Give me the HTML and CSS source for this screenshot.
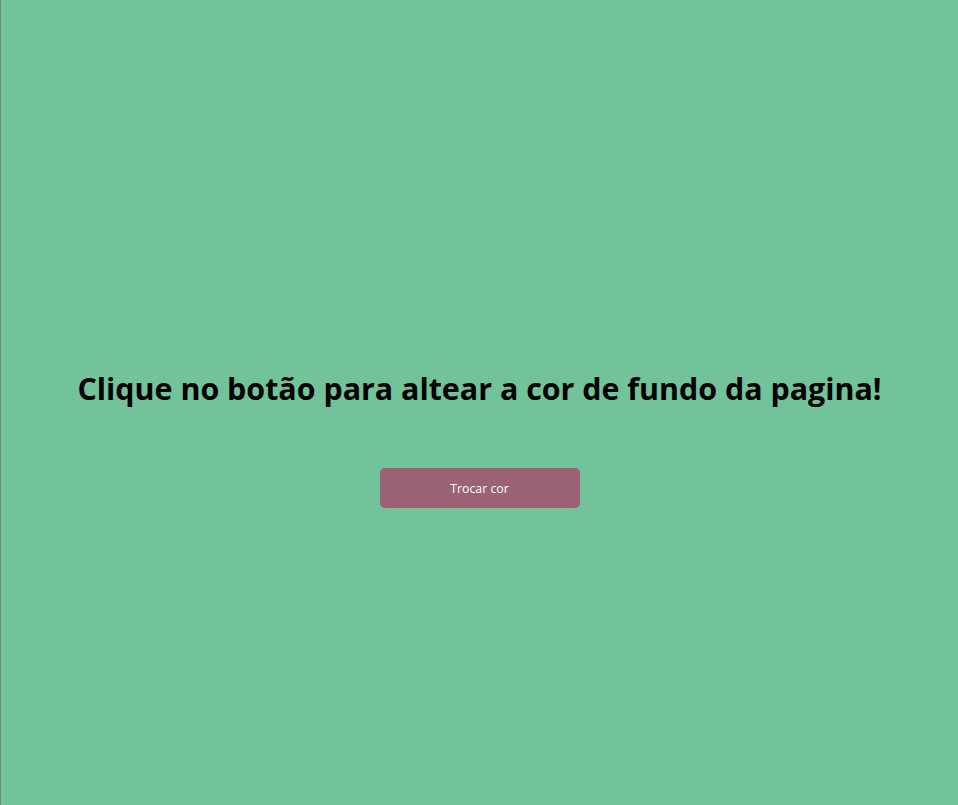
FILE: index.html
```html
<!DOCTYPE html>
<html lang="pt-BR">
<head>
<meta charset="utf-8">
<title>Trocar cor</title>
<link rel="stylesheet" href="styles.css">
</head>
<body>
<main class="page">
  <h1 class="title">Clique no botão para altear a cor de fundo da pagina!</h1>
  <button class="btn" type="button">Trocar cor</button>
</main>
</body>
</html>
```
FILE: styles.css
```css
html, body {
  margin: 0;
  padding: 0;
}
body {
  background: #72c39a;
  font-family: "Open Sans", "Noto Sans", sans-serif;
  border-left: 1px solid #808080;
  min-height: 100vh;
  box-sizing: border-box;
}
.page {
  min-height: 100vh;
  box-sizing: border-box;
  display: flex;
  flex-direction: column;
  align-items: center;
  justify-content: center;
  padding-top: 70px;
}
.title {
  margin: 0;
  font-size: 30.4px;
  line-height: 44px;
  font-weight: 700;
  color: #000;
  text-align: center;
}
.btn {
  margin-top: 57px;
  width: 200px;
  height: 40px;
  border: none;
  border-radius: 5px;
  background: #9b6174;
  color: #fff;
  font-family: "Open Sans", "Noto Sans", sans-serif;
  font-size: 12.3px;
  padding: 1px 0 0;
  cursor: pointer;
}
```
